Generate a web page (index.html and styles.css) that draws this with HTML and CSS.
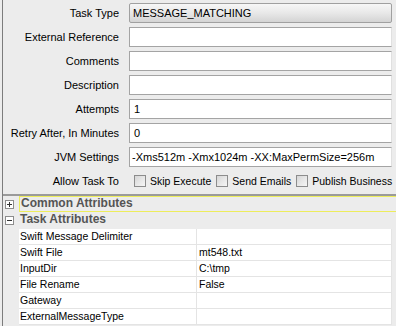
FILE: index.html
```html
<!DOCTYPE html>
<html lang="en">
<head>
  <meta charset="UTF-8" />
  <title>Task Editor</title>
  <link rel="stylesheet" href="styles.css">
</head>
<body>
  <div class="window">

    <!-- Task form -->
    <div class="task-form">
      <div class="row"><span class="label">Task Type</span><div class="combo">MESSAGE_MATCHING</div></div>
      <div class="row"><span class="label">External Reference</span><div class="field"></div></div>
      <div class="row"><span class="label">Comments</span><div class="field"></div></div>
      <div class="row"><span class="label">Description</span><div class="field"></div></div>
      <div class="row"><span class="label">Attempts</span><div class="field">1</div></div>
      <div class="row"><span class="label">Retry After, In Minutes</span><div class="field">0</div></div>
      <div class="row"><span class="label">JVM Settings</span><div class="field jvm">-Xms512m -Xmx1024m -XX:MaxPermSize=256m</div></div>
      <div class="row"><span class="label">Allow Task To</span>
        <div class="checks">
          <span class="check"><span class="box"></span>Skip Execute</span>
          <span class="check"><span class="box"></span>Send Emails</span>
          <span class="check"><span class="box"></span>Publish Business</span>
        </div>
      </div>
    </div>

    <!-- Property sheet -->
    <div class="sheet">
      <div class="category focused"><span class="toggle"><span class="tbox plus"></span></span><span class="title">Common Attributes</span></div>
      <div class="category open"><span class="toggle"><span class="tbox"></span></span><span class="title">Task Attributes</span></div>
      <div class="prop"><span class="name">Swift Message Delimiter</span><span class="value"></span></div>
      <div class="prop"><span class="name">Swift File</span><span class="value">mt548.txt</span></div>
      <div class="prop"><span class="name">InputDir</span><span class="value">C:\tmp</span></div>
      <div class="prop"><span class="name">File Rename</span><span class="value">False</span></div>
      <div class="prop"><span class="name">Gateway</span><span class="value"></span></div>
      <div class="prop"><span class="name">ExternalMessageType</span><span class="value"></span></div>
    </div>

  </div>
</body>
</html>
```

FILE: styles.css
```css
* {
  margin: 0;
  padding: 0;
  box-sizing: border-box;
  font-family: "Liberation Sans", Arial, sans-serif;
}

body {
  width: 396px;
  height: 326px;
  overflow: hidden;
  background: #ececec;
  color: #000;
  font-size: 11px;
}

.window {
  margin-left: 2px;
  height: 326px;
  border-left: 1px solid #7c7c7c;
}

/* Top form */
.task-form {
  height: 196px;
  padding-top: 3px;
  display: flex;
  flex-direction: column;
  gap: 4px;
  border-bottom: 2px solid #9a9a9a;
}

.row {
  display: grid;
  grid-template-columns: 116px 1fr;
  column-gap: 10px;
  align-items: center;
  height: 20px;
  margin-right: 4px;
}

.label {
  text-align: right;
  white-space: nowrap;
}

.field {
  height: 20px;
  line-height: 18px;
  padding-left: 4px;
  background: #fff;
  border: 1px solid #a4a4a4;
  border-right-color: #e0e0e0;
  white-space: nowrap;
  overflow: hidden;
}

.field.jvm {
  padding-left: 2px;
}

.combo {
  height: 20px;
  line-height: 18px;
  padding-left: 3px;
  border: 1px solid #a0a0a0;
  border-radius: 2px;
  background: linear-gradient(#f7f7f7, #e8e8e8 50%, #d4d4d4);
}

.checks {
  display: flex;
  align-items: center;
  gap: 5px;
  padding-left: 5px;
  font-size: 10.5px;
  white-space: nowrap;
}

.check {
  display: flex;
  align-items: center;
  gap: 4px;
}

.box {
  width: 12px;
  height: 12px;
  border: 1px solid #8c8c8c;
  background: linear-gradient(135deg, #d6d6d6, #f6f6f6);
}

/* Property sheet */
.category {
  display: flex;
  height: 16px;
}

.category.open {
  height: 17px;
}

.toggle {
  width: 16px;
  display: flex;
  align-items: center;
  padding-left: 2px;
}

.tbox {
  position: relative;
  width: 9px;
  height: 9px;
  border: 1px solid #8c8c8c;
  background: #fff;
}

.tbox::before {
  content: "";
  position: absolute;
  left: 1px;
  top: 3px;
  width: 5px;
  height: 1px;
  background: #333;
}

.tbox.plus::after {
  content: "";
  position: absolute;
  left: 3px;
  top: 1px;
  width: 1px;
  height: 5px;
  background: #333;
}

.title {
  flex: 1;
  padding-left: 1px;
  font-size: 12px;
  font-weight: bold;
  line-height: 15px;
  color: #555;
}

.category.focused .title {
  border: 1px solid #eded5c;
  border-right: none;
  line-height: 13px;
}

.prop {
  display: grid;
  grid-template-columns: 178px 1fr;
  height: 16px;
  margin-left: 16px;
  margin-right: 4px;
  background: #fff;
  border-bottom: 1px solid #e4e4e4;
  border-right: 1px solid #e4e4e4;
  font-size: 10.5px;
  line-height: 15px;
}

.name {
  padding-left: 1px;
  border-right: 1px solid #e4e4e4;
}

.value {
  padding-left: 2px;
}
```
